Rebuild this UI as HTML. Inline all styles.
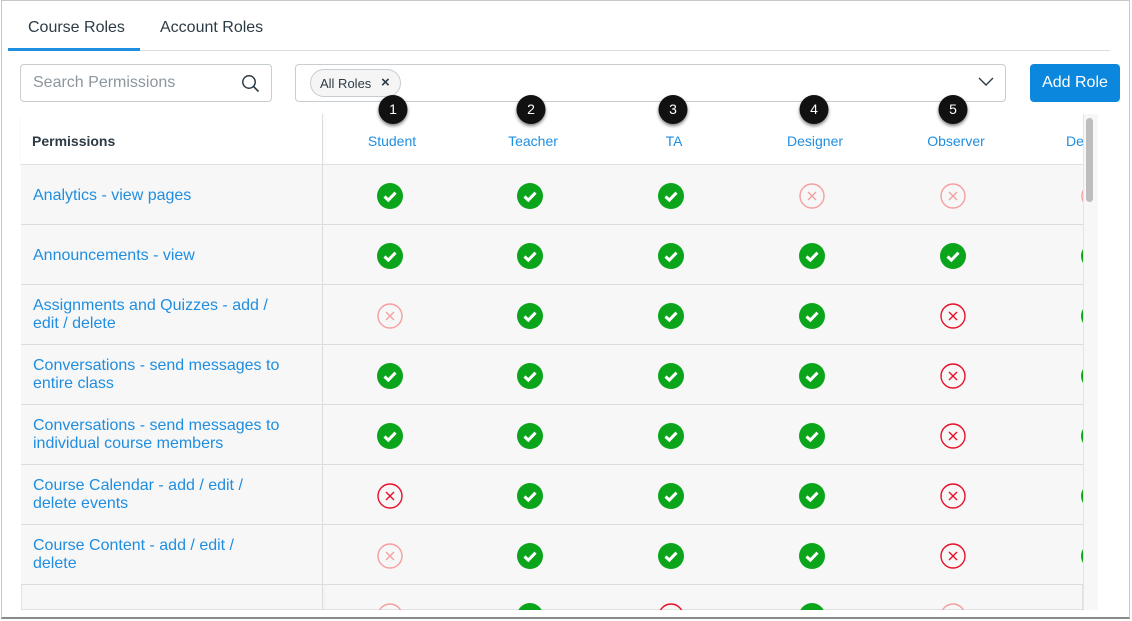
<!DOCTYPE html>
<html><head><meta charset="utf-8"><style>
*{box-sizing:border-box;margin:0;padding:0}
body{width:1132px;height:621px;background:#fff;font-family:"Liberation Sans",sans-serif;position:relative;overflow:hidden}
.frame{position:absolute;left:1px;top:0;width:1129px;height:619px;border:1px solid #c8c8c8;border-bottom:2px solid #8a8a8a;background:#fff}
.a{position:absolute}
.tab{font-size:16px;color:#2d3b45;top:19px}
.row{position:absolute;left:21px;width:1062px;height:60px;background:#f7f7f7;border-bottom:1px solid #dcdcdc}
.perm{position:absolute;left:12px;font-size:16px;line-height:18px;color:#1f8ee0}
.hd{position:absolute;top:133px;font-size:14px;color:#1f8ee0;transform:translateX(-50%)}
.bd{position:absolute;top:95px;width:29px;height:29px;border-radius:50%;background:#111;color:#fff;font-size:14px;text-align:center;line-height:29px;box-shadow:0 2px 3px rgba(0,0,0,.5);transform:translateX(-50%)}
</style></head><body>
<svg width="0" height="0" style="position:absolute"><defs>
<g id="g"><circle cx="13" cy="13" r="13" fill="#0aa51b"/><path d="M7.5 13.5l3.8 3.6 7.2-7.4" stroke="#fff" stroke-width="3" fill="none"/></g>
<g id="x"><circle cx="13" cy="13" r="12" fill="none" stroke="#e8102a" stroke-width="1.4"/><path d="M9 9l8 8M17 9l-8 8" stroke="#e8102a" stroke-width="1.4"/></g>
<g id="l"><circle cx="13" cy="13" r="12" fill="none" stroke="#f4a0a0" stroke-width="1.4"/><path d="M9 9l8 8M17 9l-8 8" stroke="#f4a0a0" stroke-width="1.4"/></g>
</defs></svg>
<div class="frame"></div>
<div class="a tab" style="left:28px">Course Roles</div>
<div class="a tab" style="left:160px">Account Roles</div>
<div class="a" style="left:8px;top:48px;width:132px;height:3px;background:#1f8ee0"></div>
<div class="a" style="left:140px;top:50px;width:970px;height:1px;background:#dbdfe2"></div>
<div class="a" style="left:20px;top:64px;width:252px;height:38px;border:1px solid #c7cdd1;border-radius:4px"></div>
<div class="a" style="left:33px;top:74px;font-size:16px;color:#8b969e">Search Permissions</div>
<svg class="a" style="left:241px;top:74px" width="20" height="20"><circle cx="8" cy="8" r="6.2" fill="none" stroke="#2d3b45" stroke-width="1.5"/><path d="M12.5 12.5l5 5" stroke="#2d3b45" stroke-width="1.6"/></svg>
<div class="a" style="left:295px;top:64px;width:711px;height:38px;border:1px solid #c7cdd1;border-radius:4px"></div>
<div class="a" style="left:310px;top:69px;width:91px;height:28px;border:1px solid #c7cdd1;border-radius:14px;background:#f5f5f5"></div>
<div class="a" style="left:320px;top:76px;font-size:13px;color:#2d3b45">All Roles</div>
<div class="a" style="left:381px;top:74px;font-size:15px;color:#2d3b45;font-weight:bold">×</div>
<svg class="a" style="left:978px;top:76px" width="16" height="12"><path d="M1 2l7 7 7-7" stroke="#2d3b45" stroke-width="1.4" fill="none"/></svg>
<div class="a" style="left:1030px;top:64px;width:90px;height:38px;background:#0b88dd;border-radius:4px;color:#fff;font-size:16px;text-align:center;line-height:38px">Add Role</div>

<div class="a" style="left:21px;top:114px;width:1062px;height:496px;border:1px solid #e2e2e2;background:#f7f7f7"></div>
<div class="a" style="left:21px;top:114px;width:1062px;height:51px;background:#fff;border-bottom:1px solid #e0e0e0;box-shadow:0 2px 3px rgba(0,0,0,.06)"></div>
<div class="a" style="left:32px;top:133px;font-size:14px;font-weight:bold;color:#2d3b45">Permissions</div>
<div class="a" style="left:322px;top:114px;width:1px;height:496px;background:#dcdcdc;box-shadow:2px 0 3px rgba(0,0,0,.06)"></div>
<div class="hd" style="left:392px">Student</div>
<div class="hd" style="left:533px">Teacher</div>
<div class="hd" style="left:674px">TA</div>
<div class="hd" style="left:815px">Designer</div>
<div class="hd" style="left:956px">Observer</div>
<div class="a" style="top:133px;left:1066px;font-size:14px;color:#1f8ee0">De</div>
<div class="bd" style="left:393px">1</div>
<div class="bd" style="left:531px">2</div>
<div class="bd" style="left:673px">3</div>
<div class="bd" style="left:814px">4</div>
<div class="bd" style="left:953px">5</div>

<div class="row" style="top:165px"><div class="perm" style="top:22px">Analytics - view pages</div></div>
<div class="row" style="top:225px"><div class="perm" style="top:22px">Announcements - view</div></div>
<div class="row" style="top:285px"><div class="perm" style="top:12px">Assignments and Quizzes - add /<br>edit / delete</div></div>
<div class="row" style="top:345px"><div class="perm" style="top:12px">Conversations - send messages to<br>entire class</div></div>
<div class="row" style="top:405px"><div class="perm" style="top:12px">Conversations - send messages to<br>individual course members</div></div>
<div class="row" style="top:465px"><div class="perm" style="top:12px">Course Calendar - add / edit /<br>delete events</div></div>
<div class="row" style="top:525px"><div class="perm" style="top:12px">Course Content - add / edit /<br>delete</div></div>
<div class="a" style="left:322px;top:165px;width:1px;height:445px;background:#dcdcdc"></div>

<svg class="a" style="left:0;top:0" width="1083" height="610">
<g transform="translate(377,183)"><use href="#g"/><use href="#g" x="140"/><use href="#g" x="281"/><use href="#l" x="422"/><use href="#l" x="563"/><use href="#l" x="704"/></g>
<g transform="translate(377,243)"><use href="#g"/><use href="#g" x="140"/><use href="#g" x="281"/><use href="#g" x="422"/><use href="#g" x="563"/><use href="#g" x="704"/></g>
<g transform="translate(377,303)"><use href="#l"/><use href="#g" x="140"/><use href="#g" x="281"/><use href="#g" x="422"/><use href="#x" x="563"/><use href="#g" x="704"/></g>
<g transform="translate(377,363)"><use href="#g"/><use href="#g" x="140"/><use href="#g" x="281"/><use href="#g" x="422"/><use href="#x" x="563"/><use href="#g" x="704"/></g>
<g transform="translate(377,423)"><use href="#g"/><use href="#g" x="140"/><use href="#g" x="281"/><use href="#g" x="422"/><use href="#x" x="563"/><use href="#g" x="704"/></g>
<g transform="translate(377,483)"><use href="#x"/><use href="#g" x="140"/><use href="#g" x="281"/><use href="#g" x="422"/><use href="#x" x="563"/><use href="#g" x="704"/></g>
<g transform="translate(377,543)"><use href="#l"/><use href="#g" x="140"/><use href="#g" x="281"/><use href="#g" x="422"/><use href="#x" x="563"/><use href="#g" x="704"/></g>
<g transform="translate(377,603)"><use href="#l"/><use href="#g" x="140"/><use href="#x" x="281"/><use href="#g" x="422"/><use href="#l" x="563"/><use href="#g" x="704"/></g>
</svg>
<div class="a" style="left:1083px;top:114px;width:15px;height:496px;background:#f7f7f7;border-left:1px solid #e4e4e4"></div>
<div class="a" style="left:1086px;top:118px;width:7px;height:84px;background:#bdbdbd;border-radius:4px"></div>
<div class="a" style="left:2px;top:610px;width:1127px;height:7px;background:#fff"></div>
</body></html>
